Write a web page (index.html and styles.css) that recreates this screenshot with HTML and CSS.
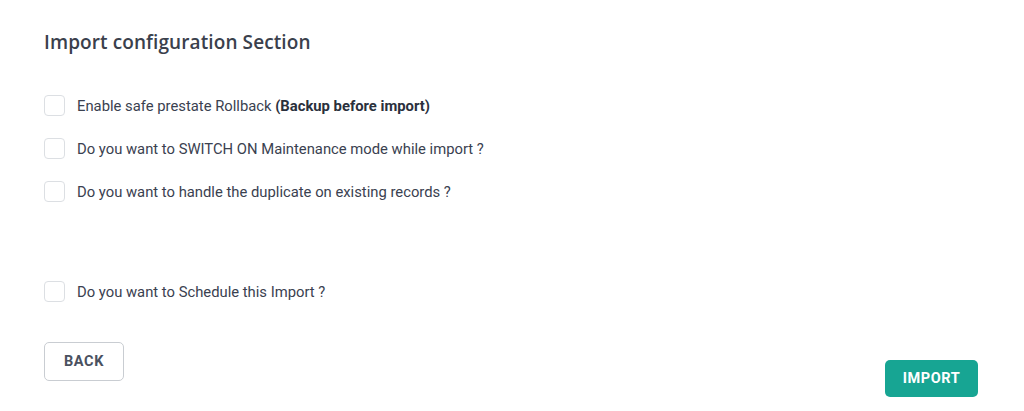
FILE: index.html
```html
<!DOCTYPE html>
<html lang="en">
<head>
    <meta charset="UTF-8">
    <meta name="viewport" content="width=device-width, initial-scale=1.0">
    <title>Import configuration</title>
    <link rel="stylesheet" href="styles.css">
</head>
<body>
    <div class="import-section">
        <h2 class="section-title">Import configuration Section</h2>

        <div class="options">
            <label class="option">
                <input type="checkbox" class="check">
                <span>Enable safe prestate Rollback <b>(Backup before import)</b></span>
            </label>
            <label class="option">
                <input type="checkbox" class="check">
                <span>Do you want to SWITCH ON Maintenance mode while import ?</span>
            </label>
            <label class="option">
                <input type="checkbox" class="check">
                <span>Do you want to handle the duplicate on existing records ?</span>
            </label>
        </div>

        <div class="options schedule">
            <label class="option">
                <input type="checkbox" class="check">
                <span>Do you want to Schedule this Import ?</span>
            </label>
        </div>

        <div class="actions">
            <button class="btn btn-back">BACK</button>
            <button class="btn btn-import">IMPORT</button>
        </div>
    </div>
</body>
</html>
```

FILE: styles.css
```css
body {
    margin: 0;
    background: #fff;
    font-family: Roboto, "Liberation Sans", sans-serif;
    color: #3a4150;
}

.import-section {
    padding: 29px 46px 0 44px;
}

.section-title {
    margin: 0 0 40px;
    font-family: "Open Sans", Lato, sans-serif;
    font-size: 19px;
    line-height: 26px;
    font-weight: 600;
    color: #3a404c;
    letter-spacing: 0.1px;
}

.options {
    display: flex;
    flex-direction: column;
    gap: 22px;
}

.schedule {
    margin-top: 79px;
}

.option {
    display: flex;
    align-items: center;
    gap: 12px;
    font-size: 14.8px;
    line-height: 20px;
    cursor: pointer;
}

.option b {
    font-weight: 700;
    color: #2a303c;
}

.check {
    appearance: none;
    margin: 0;
    width: 21px;
    height: 21px;
    border: 1px solid #dcdfe3;
    border-radius: 4px;
    background: #fff;
    cursor: pointer;
}

.actions {
    display: flex;
    justify-content: space-between;
    align-items: flex-start;
    margin-top: 40px;
}

.btn {
    font-family: Roboto, "Liberation Sans", sans-serif;
    font-size: 14.5px;
    font-weight: 700;
    letter-spacing: 0.6px;
    border-radius: 5px;
    cursor: pointer;
}

.btn-back {
    width: 80px;
    height: 39px;
    background: #fff;
    color: #4a5160;
    border: 1px solid #c9cdd2;
}

.btn-import {
    width: 93px;
    height: 37px;
    margin-top: 18px;
    background: #17a593;
    color: #fff;
    border: none;
}
```
